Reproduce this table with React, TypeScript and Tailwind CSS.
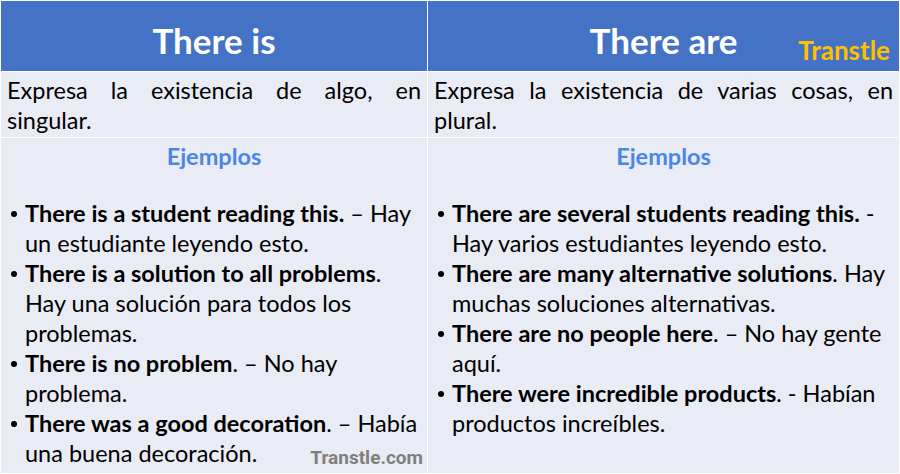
import React from "react";

const font = { fontFamily: "Lato, 'Open Sans', sans-serif" };

function Item({ b, rest }: { b: string; rest: string }) {
  return (
    <li className="flex">
      <span className="w-[18px] shrink-0 relative">
        <span className="absolute left-[4px] top-[13px] w-[6px] h-[6px] rounded-full bg-black" />
      </span>
      <span>
        <b className="font-bold">{b}</b>
        {rest}
      </span>
    </li>
  );
}

export default function App() {
  return (
    <div
      className="w-[900px] h-[474px] bg-white p-px grid grid-cols-[426px_1fr] grid-rows-[70px_65px_1fr] gap-x-px gap-y-[1px] text-black text-[23.5px] leading-[30px]"
      style={font}
    >
      <div className="bg-[#4472c4] flex items-center justify-center text-white font-bold text-[35px] pt-[8px]">
        There is
      </div>
      <div className="bg-[#4472c4] relative flex items-center justify-center text-white font-bold text-[35px] pt-[8px]">
        There are
        <span className="absolute right-[9px] top-[34px] text-[#ffc000] text-[26px] leading-[30px]">Transtle</span>
      </div>
      <div className="bg-[#e9ebf5] px-[6px] pt-[3px] text-justify">
        Expresa la existencia de algo, en singular.
      </div>
      <div className="bg-[#e9ebf5] px-[6px] pt-[3px] text-justify">
        Expresa la existencia de varias cosas, en plural.
      </div>
      <div className="bg-[#e9ebf5] relative px-[6px] pt-[3px]">
        <div className="text-center text-[#4a86e8] font-bold">Ejemplos</div>
        <div className="h-[27px]" />
        <ul>
          <Item b="There is a student reading this." rest=" – Hay un estudiante leyendo esto." />
          <Item b="There is a solution to all problems" rest=". Hay una solución para todos los problemas." />
          <Item b="There is no problem" rest=". – No hay problema." />
          <Item b="There was a good decoration" rest=". – Había una buena decoración." />
        </ul>
        <span
          className="absolute right-[4px] bottom-[4px] text-[#7f7f7f] font-bold text-[19px] leading-[22px]"
          style={{ fontFamily: "Roboto, Arial, sans-serif" }}
        >
          Transtle.com
        </span>
      </div>
      <div className="bg-[#e9ebf5] px-[6px] pt-[3px]">
        <div className="text-center text-[#4a86e8] font-bold">Ejemplos</div>
        <div className="h-[27px]" />
        <ul>
          <Item b="There are several students reading this." rest=" - Hay varios estudiantes leyendo esto." />
          <Item b="There are many alternative solutions" rest=". Hay muchas soluciones alternativas." />
          <Item b="There are no people here" rest=". – No hay gente aquí." />
          <Item b="There were incredible products" rest=". - Habían productos increíbles." />
        </ul>
      </div>
    </div>
  );
}
